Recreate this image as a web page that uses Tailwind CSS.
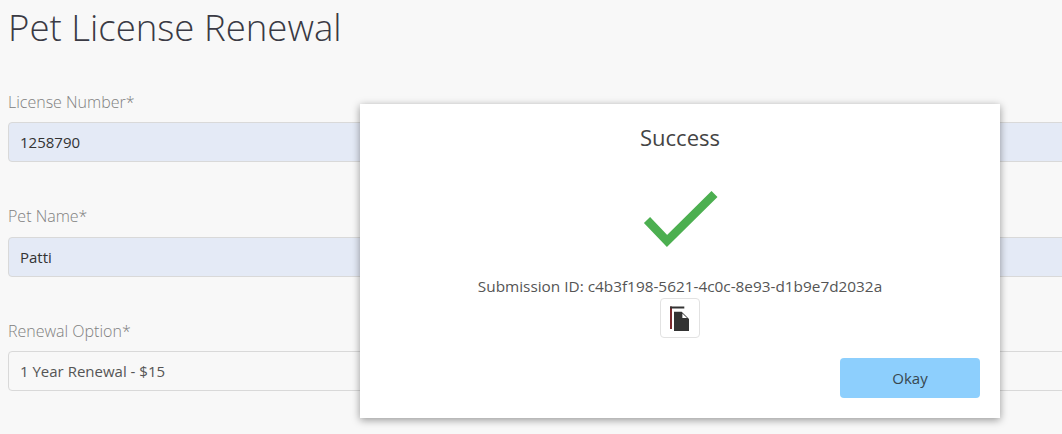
<!DOCTYPE html>
<html lang="en">
  <head>
    <meta charset="UTF-8" />
    <title>Pet License Renewal</title>
    <script src="https://cdn.jsdelivr.net/npm/@tailwindcss/browser@4"></script>
  </head>
  <body class="relative h-[434px] w-[1062px] overflow-hidden bg-[#f8f8f8] font-['Open_Sans',sans-serif] text-[#333]">
    <div class="pl-2">
      <h1 class="h-[83px] pt-[2px] text-[36.600px] leading-[50px] font-light text-[#3a3a44]">Pet License Renewal</h1>

      <div class="h-[115px]">
        <label class="block h-[39px] pt-[8px] text-[16px] leading-[22px] font-light text-[#808080]">License Number*</label>
        <div class="flex h-10 w-[1100px] items-center rounded border border-[#d9d9d9] bg-[#e4eaf6] px-[11px] text-[15px] text-[#333]">1258790</div>
      </div>
      <div class="h-[114px]">
        <label class="block h-[39px] pt-[7px] text-[16px] leading-[22px] font-light text-[#808080]">Pet Name*</label>
        <div class="flex h-10 w-[1100px] items-center rounded border border-[#d9d9d9] bg-[#e4eaf6] px-[11px] text-[15px] text-[#333]">Patti</div>
      </div>
      <div>
        <label class="block h-[39px] pt-[8px] text-[16px] leading-[22px] font-light text-[#808080]">Renewal Option*</label>
        <div class="flex h-10 w-[1100px] items-center rounded border border-[#d9d9d9] bg-[#f8f8f8] px-[11px] text-[15px] text-[#555]">1 Year Renewal - $15</div>
      </div>
    </div>

    <div class="absolute top-[104px] left-[360px] flex h-[314px] w-[640px] flex-col items-center bg-white px-5 pt-[18px] shadow-[0_2px_8px_rgba(0,0,0,0.4)]">
      <h2 class="text-[22px] leading-[30px] text-[#444]">Success</h2>
      <svg class="mt-[36px]" width="76" height="62" viewBox="0 0 76 62" fill="none">
        <path d="M5 32 L25 53 L72.500 6" stroke="#4caf50" stroke-width="8.500" />
      </svg>
      <p class="mt-[26px] text-[15.350px] leading-5 text-[#555]">Submission ID: c4b3f198-5621-4c0c-8e93-d1b9e7d2032a</p>
      <button class="mt-[2px] flex h-10 w-10 items-center justify-center rounded border border-[#e2e2e2] bg-white">
        <svg width="22" height="26" viewBox="0 0 22 26">
          <path d="M1 1.500H3V24H1z" fill="#7a2a2e" />
          <path d="M1 1.500H15.300V3.500H1z" fill="#333" />
          <path d="M5 6.700H12.700L20 14V26H5z" fill="#333" />
          <path d="M13.400 8.400 L18 13 H13.400z" fill="#fff" />
        </svg>
      </button>
      <div class="mt-5 flex w-full justify-end">
        <button class="h-10 w-[140px] rounded bg-[#8dcffd] text-[15px] text-[#37474f]">Okay</button>
      </div>
    </div>
  </body>
</html>
